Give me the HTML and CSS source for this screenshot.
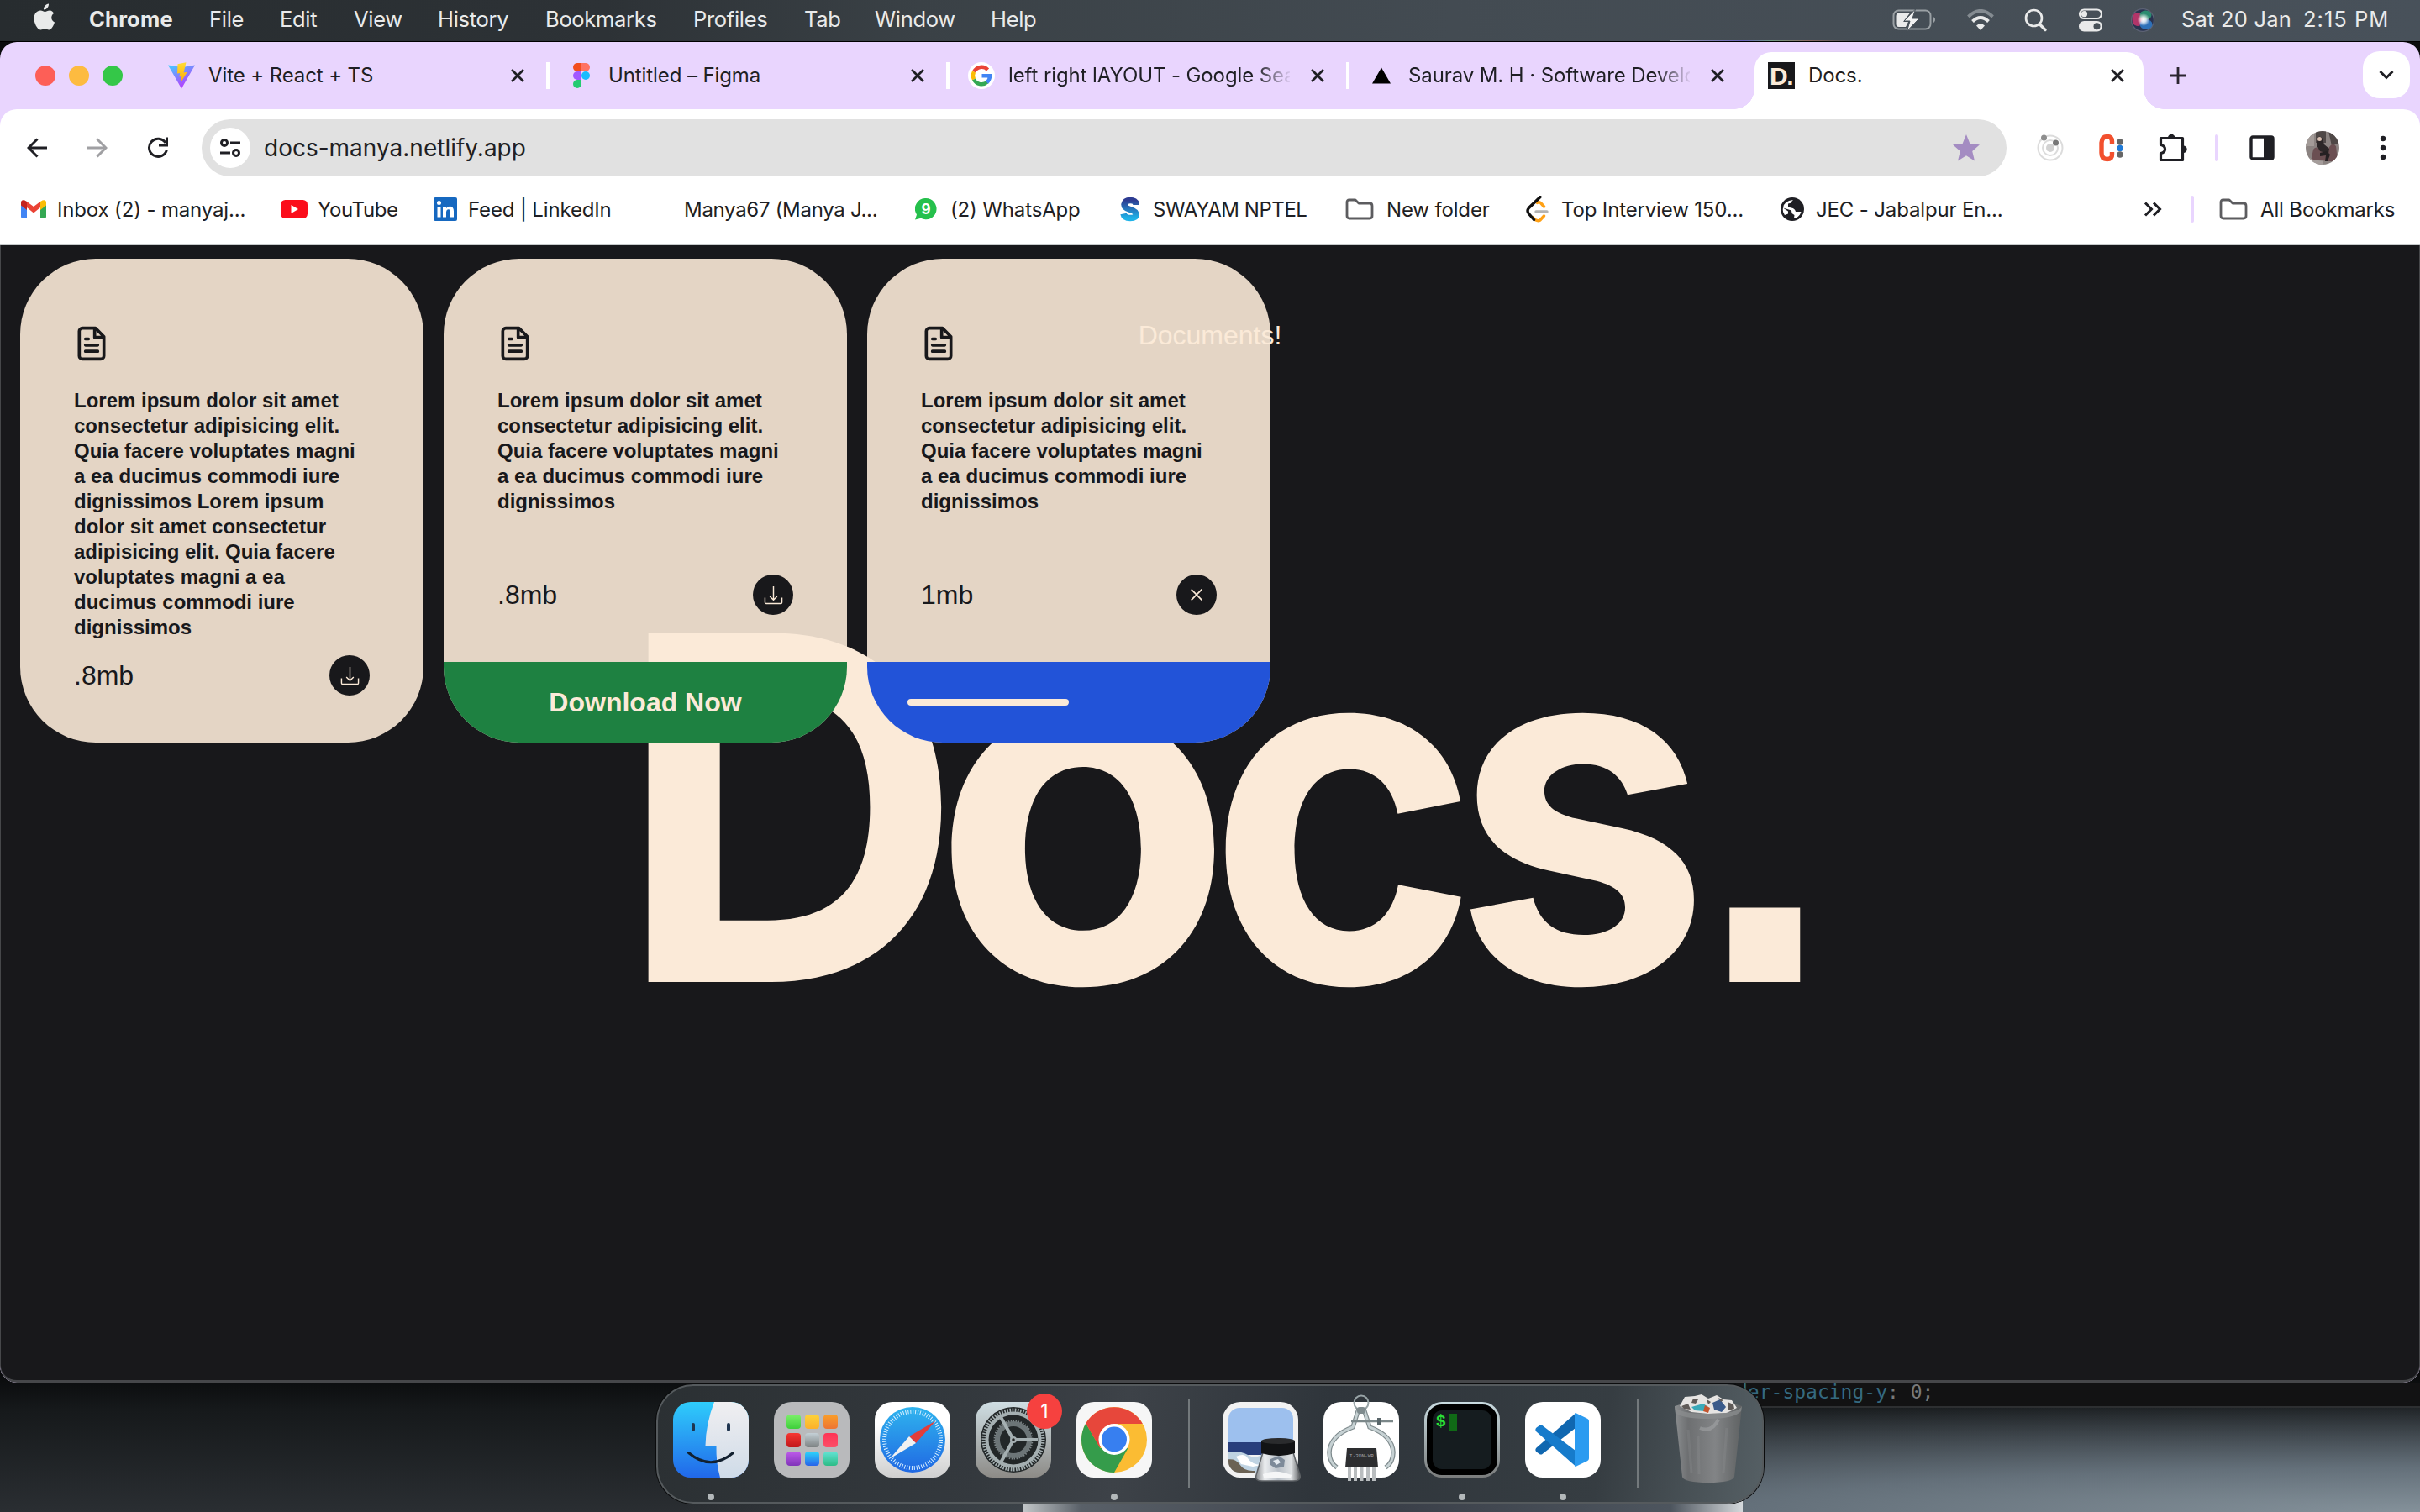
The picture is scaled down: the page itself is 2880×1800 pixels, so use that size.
FILE: index.html
```html
<!DOCTYPE html>
<html lang="en">
<head>
<meta charset="utf-8">
<title>Docs.</title>
<link rel="stylesheet" href="styles.css">
</head>
<body>
<svg width="0" height="0" class="defs" aria-hidden="true">
  <defs>
    <linearGradient id="finderBlue" x1="0" y1="0" x2="0" y2="1"><stop offset="0" stop-color="#2fcdfb"/><stop offset="1" stop-color="#2168ea"/></linearGradient>
    <linearGradient id="finderWhite" x1="0" y1="0" x2="0" y2="1"><stop offset="0" stop-color="#f0eff1"/><stop offset="1" stop-color="#cfdbe8"/></linearGradient>
    <linearGradient id="safariBlue" x1="0" y1="0" x2="0" y2="1"><stop offset="0" stop-color="#2fb4ee"/><stop offset="1" stop-color="#2068e3"/></linearGradient>
    <linearGradient id="viteA" x1="0" y1="0" x2=".6" y2="1"><stop offset="0" stop-color="#41d1ff"/><stop offset="1" stop-color="#bd34fe"/></linearGradient>
    <linearGradient id="viteB" x1="0" y1="0" x2="0" y2="1"><stop offset="0" stop-color="#ffdd35"/><stop offset="1" stop-color="#ffa800"/></linearGradient>
    <linearGradient id="swayam" x1="0" y1="0" x2="0" y2="1"><stop offset="0" stop-color="#2d3c92"/><stop offset="1" stop-color="#1fb2e8"/></linearGradient>
    <linearGradient id="bin" x1="0" y1="0" x2="1" y2="0"><stop offset="0" stop-color="#8b8e90"/><stop offset=".2" stop-color="#6d6f71"/><stop offset=".6" stop-color="#828486"/><stop offset="1" stop-color="#5f6263"/></linearGradient>
    <linearGradient id="glass" x1="0" y1="0" x2="1" y2="0"><stop offset="0" stop-color="#85888b"/><stop offset=".2" stop-color="#eceef0"/><stop offset=".5" stop-color="#b9c0c8"/><stop offset=".8" stop-color="#dfe2e4"/><stop offset="1" stop-color="#55585b"/></linearGradient>
    <radialGradient id="glow"><stop offset="0" stop-color="#fff"/><stop offset=".4" stop-color="#fff" stop-opacity=".8"/><stop offset="1" stop-color="#fff" stop-opacity="0"/></radialGradient>
    <symbol id="close" viewBox="0 0 18 18"><path d="M2 2L16 16M16 2L2 16" stroke="#1f1f24" stroke-width="2.800" fill="none"/></symbol>
    <symbol id="file" viewBox="0 0 24 24"><path d="M14.500 2H6a2 2 0 0 0-2 2v16a2 2 0 0 0 2 2h12a2 2 0 0 0 2-2V7.500z M14 2v6h6M16 13H8M16 17H8M10 9H8" fill="none" stroke="#18181b" stroke-width="2" stroke-linecap="round" stroke-linejoin="round"/></symbol>
    <symbol id="download" viewBox="0 0 24 24"><path d="M12 1v17M7.500 13.500L12 18l4.500-4.500M1.500 15v6q0 1.500 1.500 1.500h18q1.500 0 1.500-1.500v-6" fill="none" stroke="#fbead8" stroke-width="1.500"/></symbol>
    <symbol id="folder" viewBox="0 0 34 26"><path d="M2 4.500Q2 2 4.500 2H12l4 4h13q3 0 3 3v12q0 3-3 3H5q-3 0-3-3z" fill="none" stroke="#5c5c5f" stroke-width="2.800" stroke-linejoin="round"/></symbol>
  </defs>
</svg>

<header class="menubar">
  <svg class="apple" width="28" height="34" viewBox="0 0 28 34"><path d="M19 .5c.3 3.600-2.500 7-6 7C12.600 4 15.500 1 19 .5zM25 12c-4 2.500-3.600 8.500 1 10.500-1.200 4-3.600 8.500-6.500 9-2 .2-2.900-1.200-5.200-1.200S11 31.700 9.200 31.600C5 31 1.500 23 1.500 18c0-6 3.700-9.500 7.700-9.500 2.200 0 3.800 1.400 5.300 1.400s3.300-1.600 6-1.500c1.800.1 3.500 1.200 4.500 3.600z" fill="#e9eaea"/></svg>
  <span class="app">Chrome</span><span>File</span><span>Edit</span><span>View</span><span>History</span><span>Bookmarks</span><span>Profiles</span><span>Tab</span><span>Window</span><span>Help</span>
  <div class="status">
    <svg width="54" height="28" viewBox="0 0 54 28"><rect x="1.500" y="2.500" width="44" height="22" rx="6" fill="none" stroke="#9aa0a4" stroke-width="2"/><path d="M48.500 9.500q5 4 0 8z" fill="#9aa0a4"/><path d="M8 5.500h13L13 16h6l-3 6H8q-3.500 0-3.500-3.500v-9Q4.500 5.500 8 5.500z" fill="#e9eaea"/><path d="M27.500 1L14 15h7l-3.500 12L32 12h-8z" fill="#f2f2f2" stroke="#475058" stroke-width="1"/></svg>
    <svg width="34" height="26" viewBox="0 0 34 26"><path d="M2.500 9Q17-5 31.500 9" fill="none" stroke="#848b91" stroke-width="4"/><path d="M7.500 14.500q9.500-9 19 0" fill="none" stroke="#e9eaea" stroke-width="4"/><path d="M17 25l-5-5.500q5-4.500 10 0z" fill="#e9eaea"/></svg>
    <svg width="28" height="28" viewBox="0 0 28 28"><circle cx="11.500" cy="11.500" r="9.500" fill="none" stroke="#e9eaea" stroke-width="2.600"/><path d="M18 18.500l7 7" stroke="#e9eaea" stroke-width="3.400" stroke-linecap="round"/></svg>
    <svg width="30" height="28" viewBox="0 0 30 28"><rect x="2" y="1.500" width="26" height="10.500" rx="5.250" fill="none" stroke="#e9eaea" stroke-width="2.200"/><circle cx="7.500" cy="6.700" r="3.600" fill="#e9eaea"/><rect x="1" y="15" width="28" height="12.500" rx="6.250" fill="#e9eaea"/><circle cx="22.500" cy="21.200" r="4" fill="#475058"/></svg>
    <svg width="28" height="28" viewBox="0 0 28 28"><circle cx="14" cy="14" r="14" fill="#5d6375"/><circle cx="14" cy="14" r="12.800" fill="#2a3350"/><ellipse cx="8" cy="13" rx="6.500" ry="8" fill="#d5366f" opacity=".8"/><ellipse cx="17.500" cy="8" rx="7" ry="5.500" fill="#2c9b75" opacity=".85"/><ellipse cx="18" cy="19" rx="7.500" ry="6" fill="#2f7fd2" opacity=".8"/><circle cx="15" cy="13.500" r="7.500" fill="url(#glow)"/></svg>
    <span class="date">Sat 20 Jan</span><span class="time">2:15 PM</span>
  </div>
</header>

<section class="window">
  <nav class="tabs">
    <div class="lights"><i class="red"></i><i class="amber"></i><i class="green"></i></div>
    <div class="tab">
      <svg width="32" height="32" viewBox="0 0 32 32"><path d="M0 3.500L16 31.500 32 3.500 17 6z" fill="url(#viteA)"/><path d="M21.500.3L11.500 2.300 11 13.500l3.300-.6-1 4.600 3-.8-1.500 8 8-13-4.200.7z" fill="url(#viteB)"/></svg>
      <span class="label">Vite + React + TS</span><svg class="x" width="18" height="18"><use href="#close"/></svg>
    </div>
    <div class="tab">
      <svg width="32" height="32" viewBox="0 0 32 32"><path d="M16 1v10h-5a5 5 0 0 1 0-10z" fill="#f24e1e"/><path d="M16 1h5a5 5 0 0 1 0 10h-5z" fill="#ff7262"/><path d="M16 11v10h-5a5 5 0 0 1 0-10z" fill="#a259ff"/><circle cx="21" cy="16" r="5" fill="#1abcfe"/><path d="M16 21v5a5 5 0 1 1-5-5z" fill="#24cb71"/></svg>
      <span class="label">Untitled – Figma</span><svg class="x" width="18" height="18"><use href="#close"/></svg>
    </div>
    <div class="tab">
      <svg width="32" height="32" viewBox="0 0 32 32"><circle cx="16" cy="16" r="16" fill="#fff"/><g fill="none" stroke-width="4.400"><path d="M23.500 9A10.200 10.200 0 0 0 7 11.500" stroke="#ea4335"/><path d="M7 11.500a10.200 10.200 0 0 0 0 9" stroke="#fbbc04"/><path d="M7 20.500a10.200 10.200 0 0 0 16 3.200" stroke="#34a853"/><path d="M22.500 24a10.200 10.200 0 0 0 3.500-7.800H16.500" stroke="#4285f4"/></g></svg>
      <span class="label fade">left right lAYOUT - Google Search</span><svg class="x" width="18" height="18"><use href="#close"/></svg>
    </div>
    <div class="tab last">
      <svg width="32" height="32" viewBox="0 0 32 32"><path d="M16 6.500L27 25.500H5z" fill="#000"/></svg>
      <span class="label fade">Saurav M. H · Software Developer</span><svg class="x" width="18" height="18"><use href="#close"/></svg>
    </div>
    <div class="tab active">
      <span class="fav">D.</span>
      <span class="label">Docs.</span><svg class="x" width="18" height="18"><use href="#close"/></svg>
    </div>
    <svg class="plus" width="22" height="22" viewBox="0 0 22 22"><path d="M11 1v20M1 11h20" stroke="#2b2530" stroke-width="2.800"/></svg>
    <div class="tabsearch"><svg width="18" height="12" viewBox="0 0 18 12"><path d="M1.500 2L9 9.500 16.500 2" fill="none" stroke="#1f1f24" stroke-width="3"/></svg></div>
  </nav>

  <div class="toolbar">
    <div class="navbtns">
      <svg width="24" height="24" viewBox="0 0 24 24"><path d="M24 12H2.500M12.500 1.500L2 12l10.500 10.500" fill="none" stroke="#1f1f24" stroke-width="3"/></svg>
      <svg width="24" height="24" viewBox="0 0 24 24"><path d="M0 12h21.500M11.500 1.500L22 12 11.500 22.500" fill="none" stroke="#a0a0a3" stroke-width="3"/></svg>
      <svg width="26" height="26" viewBox="0 0 26 26"><path d="M22 7A10.600 10.600 0 1 0 23.500 15" fill="none" stroke="#1f1f24" stroke-width="3"/><path d="M25 .500V11.500H14V8.500H22V.500z" fill="#1f1f24"/></svg>
    </div>
    <div class="omnibox">
      <div class="tune"><svg width="26" height="22" viewBox="0 0 26 22"><g fill="none" stroke="#1f1f24" stroke-width="3"><circle cx="6" cy="5" r="3.500"/><path d="M13 5h12M1 17h12"/><circle cx="20" cy="17" r="3.500"/></g></svg></div>
      <span class="url">docs-manya.netlify.app</span>
      <svg class="star" width="34" height="32" viewBox="0 0 34 32"><path d="M17 0l4.500 11.300L33 12.300l-8.800 7.800L27 31.500l-10-6.200-10 6.200 2.800-11.400L1 12.300l11.500-1z" fill="#a48cc2"/></svg>
    </div>
    <div class="actions">
      <svg width="32" height="32" viewBox="0 0 32 32"><g fill="none" stroke="#dcdcdc" stroke-width="2"><circle cx="16" cy="16" r="14.500"/><circle cx="16" cy="16" r="9"/></g><circle cx="16" cy="16" r="5" fill="#d2d2d2"/><circle cx="8.500" cy="4" r="3.500" fill="#8e8e8e"/><circle cx="22.500" cy="10" r="3.500" fill="#777"/></svg>
      <svg width="32" height="34" viewBox="0 0 32 34"><path d="M16.500 12V9.500Q16.500 3.500 10.500 3.500T4 11v12q0 7.500 6.500 7.500t6-6V22" fill="none" stroke="#f2502e" stroke-width="5.400"/><circle cx="26" cy="10" r="3.700" fill="#666"/><circle cx="26" cy="17.500" r="3.700" fill="#1f7ad8"/><circle cx="26" cy="25" r="3.700" fill="#666"/></svg>
      <svg width="36" height="34" viewBox="0 0 36 34"><path d="M3.500 5.500h26v26h-26v-8q5-1 5-5t-5-5z" fill="none" stroke="#1f1f24" stroke-width="3.200" stroke-linejoin="round"/><path d="M12 5a4.200 4.200 0 0 1 8.400 0zM30.500 14.500a4.200 4.200 0 0 1 0 8.400z" fill="#1f1f24"/></svg>
      <i class="sep"></i>
      <svg width="30" height="30" viewBox="0 0 30 30"><rect x="2" y="2" width="26" height="26" rx="2" fill="none" stroke="#1f1f24" stroke-width="3.400"/><path d="M17 2h11v26H17z" fill="#1f1f24"/></svg>
      <svg width="40" height="40" viewBox="0 0 40 40"><clipPath id="av"><circle cx="20" cy="20" r="20"/></clipPath><g clip-path="url(#av)"><rect width="40" height="40" fill="#8b8381"/><path d="M0 0h10v18H0z" fill="#a39b98"/><path d="M12 0h12v14H12zM27 0h13v14l-9 4z" fill="#4f4847"/><path d="M6 36L9 22q3-5 8 0l10-1q4-8 9-3l2 18H26l-12-2z" fill="#6b4f52"/><path d="M14 8q3-3 6 1l2 7 6 5-1 6-10-3-4-7z" fill="#2b2627"/><circle cx="16.500" cy="9.500" r="2.500" fill="#d8bfb2"/><path d="M17 26l8-2 4 4-3 8h-3l1-7-7 1z" fill="#252022"/><path d="M0 30l9 4 12 2v4H0z" fill="#a59d9b"/></g></svg>
      <svg width="8" height="30" viewBox="0 0 8 30"><g fill="#1f1f24"><circle cx="4" cy="4" r="3.200"/><circle cx="4" cy="15" r="3.200"/><circle cx="4" cy="26" r="3.200"/></g></svg>
    </div>
  </div>

  <div class="bookmarks">
    <div class="bm"><svg width="30" height="22" viewBox="0 0 30 22"><path d="M0 3v17q0 2 2 2h5V9z" fill="#4285f4"/><path d="M30 3v17q0 2-2 2h-5V9z" fill="#34a853"/><path d="M7 9v-7l8 6 8-6v7l-8 6.500z" fill="#ea4335"/><path d="M0 3.500v3L7 12V2L4.500.6Q0-.6 0 3.500z" fill="#c5221f"/><path d="M30 3.500v3L23 12V2l2.500-1.400Q30-.6 30 3.500z" fill="#fbbc04"/></svg><span>Inbox (2) - manyaj...</span></div>
    <div class="bm"><svg width="32" height="22" viewBox="0 0 32 22"><rect width="32" height="22" rx="5.500" fill="#fb0d1b"/><path d="M12.500 6v10l8.500-5z" fill="#fff"/></svg><span>YouTube</span></div>
    <div class="bm"><svg width="28" height="28" viewBox="0 0 28 28"><rect width="28" height="28" rx="2" fill="#1668c0"/><circle cx="6.500" cy="6.500" r="2.500" fill="#fff"/><path d="M4.500 11h4v12.500h-4zM11 11h4v2q1.500-2.300 4.300-2.300 4.700 0 4.700 5.800v7h-4v-6.300q0-3-2.300-3T15 17.500v6h-4z" fill="#fff"/></svg><span>Feed | LinkedIn</span></div>
    <div class="bm"><span>Manya67 (Manya J...</span></div>
    <div class="bm"><svg width="26" height="26" viewBox="0 0 26 26"><path d="M13 0a12.600 12.600 0 1 1-6 23.700L0 25.500l2-6A12.600 12.600 0 0 1 13 0z" fill="#25c04c"/><text x="13" y="19" text-anchor="middle" class="nine">9</text></svg><span>(2) WhatsApp</span></div>
    <div class="bm"><svg width="24" height="30" viewBox="0 0 24 30"><path d="M19 10V8.500Q18 4.500 12 4.500T5 9.500Q5 13.500 12 15.500T19 21.500Q19 25.500 12 25.500T4 20.500" fill="none" stroke="url(#swayam)" stroke-width="7.500"/></svg><span>SWAYAM NPTEL</span></div>
    <div class="bm"><svg width="34" height="26"><use href="#folder"/></svg><span>New folder</span></div>
    <div class="bm"><svg width="28" height="32" viewBox="0 0 28 32"><path d="M13.500 8.500q2-1.500 4 0l4 4.500M8 25.500q5 6 9 3.500l4.500-5" fill="none" stroke="#ffa116" stroke-width="3.400" stroke-linecap="round"/><path d="M17 1.500L3.500 14.500q-3 3.500 0 7l6 7" fill="none" stroke="#111" stroke-width="3.400" stroke-linecap="round"/><path d="M12 19h13" stroke="#b3b3b3" stroke-width="3.400" stroke-linecap="round"/></svg><span>Top Interview 150...</span></div>
    <div class="bm"><svg width="28" height="28" viewBox="0 0 28 28"><circle cx="14" cy="14" r="14" fill="#1f1f24"/><path d="M15 3q-2 1-2 3.500l-4 1v4l4 1q4 .5 5 4.500h6.500q-2 7-8.500 7.800l.5-3.800-3-2-.5-3.500L3 12.500q-1 5 2 8.500l4-1.500v-3L3 12.500Q4 4 15 3z" fill="#fff"/></svg><span>JEC - Jabalpur En...</span></div>
    <svg width="22" height="18" viewBox="0 0 22 18"><path d="M2 1.500L9.500 9 2 16.500M12 1.500L19.500 9 12 16.500" fill="none" stroke="#1f1f24" stroke-width="3"/></svg>
    <i class="sep"></i>
    <div class="bm all"><svg width="34" height="26"><use href="#folder"/></svg><span>All Bookmarks</span></div>
  </div>

  <main class="page">
    <div class="hero">
      <p class="heading">Documents!</p>
      <h1 class="docs"><span class="d">D</span><span class="o">o</span><span class="c">c</span><span class="s">s</span><span class="dot">.</span></h1>
    </div>
    <div class="cards">
      <article class="card">
        <svg class="icon" width="44" height="44"><use href="#file"/></svg>
        <p>Lorem ipsum dolor sit amet consectetur adipisicing elit. Quia facere voluptates magni a ea ducimus commodi iure dignissimos Lorem ipsum dolor sit amet consectetur adipisicing elit. Quia facere voluptates magni a ea ducimus commodi iure dignissimos</p>
        <div class="foot"><span>.8mb</span><b class="round"><svg width="23" height="23"><use href="#download"/></svg></b></div>
      </article>
      <article class="card">
        <svg class="icon" width="44" height="44"><use href="#file"/></svg>
        <p>Lorem ipsum dolor sit amet consectetur adipisicing elit. Quia facere voluptates magni a ea ducimus commodi iure dignissimos</p>
        <div class="foot"><span>.8mb</span><b class="round"><svg width="23" height="23"><use href="#download"/></svg></b></div>
        <div class="tag go">Download Now</div>
      </article>
      <article class="card">
        <svg class="icon" width="44" height="44"><use href="#file"/></svg>
        <p>Lorem ipsum dolor sit amet consectetur adipisicing elit. Quia facere voluptates magni a ea ducimus commodi iure dignissimos</p>
        <div class="foot"><span>1mb</span><b class="round"><svg width="14" height="14" viewBox="0 0 14 14"><path d="M.7.7l12.600 12.600M13.300.7L.7 13.300" stroke="#fbead8" stroke-width="1.700"/></svg></b></div>
        <div class="tag busy"><i class="bar"></i></div>
      </article>
    </div>
  </main>
</section>

<footer class="desktop">
  <div class="editor"><span class="prop">der-spacing-y</span>: 0;</div>
  <div class="sliver"></div>
  <div class="dock">
    <div class="slot run"><svg width="90" height="90" viewBox="0 0 90 90"><clipPath id="fc"><rect width="90" height="90" rx="21"/></clipPath><g clip-path="url(#fc)"><rect width="90" height="90" fill="url(#finderBlue)"/><path d="M49 0Q39 26 38.500 52H51.500Q51 72 56 90H90V0z" fill="url(#finderWhite)"/></g><path d="M24 27v6M66 27v6" stroke="#1f3550" stroke-width="4" stroke-linecap="round"/><path d="M18.500 60.500Q45 83 71.500 60.500" fill="none" stroke="#12202f" stroke-width="3" stroke-linecap="round"/></svg></div>
    <div class="slot"><div class="launch"><i class="c1"></i><i class="c2"></i><i class="c3"></i><i class="c4"></i><i class="c5"></i><i class="c6"></i><i class="c7"></i><i class="c8"></i><i class="c9"></i></div></div>
    <div class="slot"><svg width="90" height="90" viewBox="0 0 90 90"><linearGradient id="sf" x1="0" y1="0" x2="0" y2="1"><stop offset=".3" stop-color="#fff"/><stop offset="1" stop-color="#cfcfcf"/></linearGradient><rect width="90" height="90" rx="21" fill="url(#sf)"/><circle cx="45" cy="45" r="39" fill="url(#safariBlue)"/><circle cx="45" cy="45" r="33.500" fill="none" stroke="#d8efff" stroke-width="5" stroke-dasharray="1 1.923"/><path d="M72.500 22.500L41 41l8 8z" fill="#e23d3a"/><path d="M18 67.500L41 41l8 8z" fill="#f1f1f1"/></svg></div>
    <div class="slot"><svg width="90" height="90" viewBox="0 0 90 90"><linearGradient id="sg" x1="0" y1="0" x2="0" y2="1"><stop offset="0" stop-color="#cfdee3"/><stop offset="1" stop-color="#8d8b87"/></linearGradient><rect width="90" height="90" rx="21" fill="url(#sg)"/><circle cx="45" cy="45" r="39" fill="#222728"/><g fill="none" stroke="#a4afb1"><circle cx="45" cy="45" r="35" stroke-width="5" stroke-dasharray="1.600 1.540"/><circle cx="45" cy="45" r="31.500" stroke-width="4"/><circle cx="45" cy="45" r="19" stroke-width="6" stroke="#6c7577"/><circle cx="45" cy="45" r="22.500" stroke-width="2" stroke-dasharray="1.500 1.500" stroke="#7c8587"/><path d="M45 45h29M45 45L30 18M45 45L30 72" stroke-width="4"/></g><circle cx="45" cy="45" r="4" fill="#a4afb1"/><circle cx="45" cy="45" r="1.800" fill="#222"/></svg><span class="badge">1</span></div>
    <div class="slot run"><svg width="90" height="90" viewBox="0 0 90 90"><rect width="90" height="90" rx="21" fill="#f6f6f6"/><circle cx="45" cy="45" r="39" fill="#fbbc33"/><path d="M11.200 25.500A39 39 0 0 0 45 84L61.500 55 28.500 55z" fill="#359c4b"/><path d="M11.200 25.500L28 54.500 45 26h33.800A39 39 0 0 0 11.200 25.500z" fill="#e7473b"/><circle cx="45" cy="44.500" r="18.500" fill="#fff"/><circle cx="45" cy="44.500" r="15" fill="#377ff0"/></svg></div>
    <i class="rule"></i>
    <div class="slot"><svg width="96" height="96" viewBox="0 0 96 96" class="spill"><rect width="90" height="90" rx="21" fill="#f2f2f2"/><clipPath id="pc"><rect x="7" y="7" width="77" height="77" rx="13"/></clipPath><g clip-path="url(#pc)"><rect width="90" height="50" fill="#9dc0ee"/><rect y="48" width="90" height="15" fill="#283e7c"/><path d="M0 60q20-3 30 3t18-2l42 3v26H0z" fill="#bfd3e2"/><path d="M0 70q14-5 20 4t18 8v8H0z" fill="#6b6254"/><path d="M16 65q10-5 14 2t16 8l-10 2-14-3z" fill="#fff"/></g><path d="M48 60h36l8 27q2 7-8 7H47q-9 0-7-7z" fill="url(#glass)" stroke="#5c6064" stroke-width="1.500"/><path d="M57 68l10-4 7 5-1 8-10 2-6-4z" fill="#7d8a99"/><path d="M60 70l6-2 3 4-5 3z" fill="#e4eaf0"/><path d="M48 86q16-7 34 1l-1 3H49z" fill="#f5f6f7"/><path d="M46 46v15q20 6 40 0V46z" fill="#121315"/><ellipse cx="66" cy="46.500" rx="20" ry="3.500" fill="#2a2b2d"/></svg></div>
    <div class="slot"><svg width="90" height="106" viewBox="0 -9 90 106" class="tall"><rect width="90" height="90" rx="21" fill="#fff"/><circle cx="45" cy="1" r="8.500" fill="none" stroke="#98a4a7" stroke-width="2"/><path d="M42 8L35 30Q8 40 7 60q0 12 9 18M48 8l7 22q27 10 28 30 0 12-9 18" fill="none" stroke="#7f8b8e" stroke-width="5.500"/><path d="M42 8L35 30Q8 40 7 60q0 12 9 18M48 8l7 22q27 10 28 30 0 12-9 18" fill="none" stroke="#c6d1d3" stroke-width="3"/><path d="M33 23h50" stroke="#7b8789" stroke-width="2.500"/><rect x="40" y="6" width="10" height="8" rx="3" fill="#7f8b8e"/><path d="M66 19v8" stroke="#59666a" stroke-width="4"/><path d="M28 55h35l2 23H26z" fill="#2d2e30"/><g class="chip"><text x="45.500" y="66" text-anchor="middle">I-3DN-WB</text></g><path d="M31 77v17M38 77v17M45.500 77v17M53 77v17M60 77v17" stroke="#b9bdbf" stroke-width="4"/></svg></div>
    <div class="slot run"><div class="term"><div class="screen"><span>$</span><i></i></div></div></div>
    <div class="slot run"><svg width="90" height="90" viewBox="0 0 90 90"><rect width="90" height="90" rx="21" fill="#fff"/><path d="M60 13.500L13 55q-1.500 2 0 4l4 3q2 1 3.500 0L60 31z" fill="#1067b0"/><path d="M60 76.500L13 35q-1.500-2 0-4l4-3q2-1 3.500 0L60 58z" fill="#167bcb"/><path d="M59 13.500q1-.5 2 0l13 6.200q2 1 2 3v44.600q0 2-2 3L61 76.500q-1 .5-2 0z" fill="#2b9bf0"/></svg></div>
    <i class="rule"></i>
    <div class="slot bin"><svg width="84" height="106" viewBox="0 0 84 106" class="tall"><path d="M2 14q40-14 80 0l-9 84q-2 7-31 7t-31-7z" fill="url(#bin)"/><path d="M8 14L14 3l12-1 8-2 8 5L52 1l8 5 10 1 6 9-12 6-22 1-20-2z" fill="#e6e4e2"/><path d="M22 15l14-4 6 4-4 5-12-1z" fill="#3aa9b8"/><path d="M47 10l9-4 7 9-5 6-9-3z" fill="#3a5a8a"/><path d="M38 13l6 3-2 6-6-2z" fill="#c3552e"/><path d="M10 14l8-3 3 7-8-1zM24 5l6 1-3 5-5-1zM54 4l6 3-3 2zM65 9l7 3 1 5-7 2zM40 6l5 3-3 3z" fill="#5f5a57"/><path d="M2 14q4 9 40 9t40-9l-1 6q-8 9-39 9T3 22z" fill="#8b8d8f" opacity=".75"/><path d="M18 42l4 52M30 50l1 45M64 40l-4 54" stroke="#9a9c9e" stroke-width="3" opacity=".2"/><path d="M32 40q14 6 22-10" stroke="#a8aaab" stroke-width="4" opacity=".5" fill="none"/></svg></div>
  </div>
</footer>
</body>
</html>
```
FILE: styles.css
```css
* { box-sizing: border-box; }
body {
  margin: 0;
  width: 2880px;
  height: 1800px;
  overflow: hidden;
  position: relative;
  background: #0b0c0e;
  font-family: Inter, "Liberation Sans", sans-serif;
  color: #1f1f24;
}
svg { display: block; flex: none; }
.defs { position: absolute; }

/* menu bar */
.menubar {
  height: 50px;
  border-bottom: 1px solid #000;
  padding-left: 39px;
  display: grid;
  grid-template-columns: 67px 143px 84px 88px 100px 128px 176px 132px 84px 138px 100px 1fr;
  align-items: center;
  background:
    linear-gradient(90deg, #9aa0a8, #6a64b8 40%, #6f9a80 55%, #8a6a64 75%, transparent) 1987px 48px / 220px 1px no-repeat,
    linear-gradient(90deg, #272c2f 0, #2d3236 25%, #3a4146 38%, #434b52 60%, #48515a 100%);
  color: #e9eaea;
  font-size: 25.500px;
  letter-spacing: -.3px;
  white-space: nowrap;
}
.menubar span { line-height: 46px; padding-bottom: 3px; }
.apple { margin-top: -7px; }
.menubar .app { font-weight: 700; letter-spacing: .2px; }
.status { display: flex; justify-content: flex-end; align-items: center; padding-right: 36px; margin-top: -1px; letter-spacing: .2px; }
.status svg:nth-child(1) { margin-right: 34px; }
.status svg:nth-child(2) { margin-right: 35px; }
.status svg:nth-child(3) { margin-right: 36px; }
.status svg:nth-child(4) { margin-right: 33px; }
.status svg:nth-child(5) { margin-right: 32px; }
.status .date { width: 145px; }
.status .time { width: 103px; letter-spacing: 1px; }

/* browser window */
.window {
  height: 1596px;
  border-radius: 20px;
  overflow: hidden;
  background: #e9d5fe;
  display: flex;
  flex-direction: column;
  position: relative;
  z-index: 1;
}
.tabs { height: 80px; display: flex; align-items: center; }
.lights { width: 178px; padding-left: 42px; display: flex; gap: 16px; }
.lights i { width: 24px; height: 24px; border-radius: 50%; }
.red { background: #fd5f57; }
.amber { background: #fdbb40; }
.green { background: #34c748; }
.tab {
  width: 476px;
  height: 32px;
  padding-left: 22px;
  display: flex;
  align-items: center;
  font-size: 24px;
  letter-spacing: -.1px;
  flex: none;
  border-right: 4px solid #fff;
  position: relative;
}
.tab.last { border-right-color: transparent; }
.label { width: 335px; margin-left: 16px; white-space: nowrap; overflow: hidden; line-height: 32px; flex: none; }
.fade { -webkit-mask-image: linear-gradient(90deg, #000 88%, transparent 101%); mask-image: linear-gradient(90deg, #000 88%, transparent 101%); }
.x { margin-left: 24px; }
.tab.active {
  height: 68px;
  margin: 12px 0 0 6px;
  width: 463px;
  padding-left: 16px;
  border: 0;
  background: #fff;
  border-radius: 20px 20px 0 0;
}
.tab.active::before, .tab.active::after {
  content: "";
  position: absolute;
  bottom: 0;
  width: 24px;
  height: 24px;
}
.tab.active::before { left: -24px; background: radial-gradient(circle at 0 0, transparent 23.500px, #fff 24px); }
.tab.active::after { right: -24px; background: radial-gradient(circle at 100% 0, transparent 23.500px, #fff 24px); }
.tab.active > * { position: relative; top: -6px; }
.fav {
  width: 32px;
  height: 32px;
  background: #18181b;
  color: #fbead8;
  font: 700 30px/33px "Liberation Sans", sans-serif;
  letter-spacing: -1.500px;
  padding-left: 2px;
  overflow: hidden;
}
.plus { margin-left: 30px; }
.tabsearch {
  width: 56px;
  height: 56px;
  margin: -2px 12px 0 auto;
  border-radius: 20px;
  background: #fff;
  display: grid;
  place-items: center;
}

.toolbar {
  height: 92px;
  padding: 0 0 0 32px;
  display: flex;
  align-items: center;
  background: #fff;
  border-radius: 20px 20px 0 0;
}
.navbtns { width: 208px; flex: none; display: flex; gap: 48px; align-items: center; }
.navbtns svg:last-child { margin-left: -1px; }
.omnibox {
  width: 2148px;
  height: 68px;
  flex: none;
  border-radius: 34px;
  background: #e1e1e1;
  display: flex;
  align-items: center;
  padding: 0 31px 0 10px;
}
.tune { width: 48px; height: 48px; border-radius: 50%; background: #fff; display: grid; place-items: center; }
.url { margin-left: 16px; font-size: 28px; }
.star { margin-left: auto; }
.actions { margin-left: 36px; display: flex; align-items: center; flex: none; }
.actions > :nth-child(2) { margin-left: 41px; }
.actions > :nth-child(3) { margin-left: 39px; }
.actions > :nth-child(4) { margin-left: 32px; }
.actions > :nth-child(5) { margin-left: 37px; }
.actions > :nth-child(6) { margin-left: 37px; }
.actions > :nth-child(7) { margin-left: 48px; }
.sep { width: 4px; height: 32px; border-radius: 2px; background: #e9d5fe; }

.bookmarks {
  height: 70px;
  padding: 0 0 14px 25px;
  border-bottom: 2px solid #c6cacb;
  background: #fff;
  display: grid;
  grid-template-columns: 309px 182px 299px 274px 244px 268px 215px 303px 432px 56px 34px 1fr;
  align-items: center;
  font-size: 24px;
  letter-spacing: -.15px;
  white-space: nowrap;
}
.bm { display: flex; align-items: center; gap: 13px; }
.bm:nth-child(2) { gap: 12px; letter-spacing: -.4px; }
.bm:nth-child(4) { margin-left: -1px; letter-spacing: -.3px; }
.bm:nth-child(5) { gap: 16px; }
.bm:nth-child(6) { gap: 15px; letter-spacing: -.45px; }
.bm:nth-child(7), .bm.all { gap: 15px; }
.bm:nth-child(8), .bm:nth-child(9) { gap: 14px; }
.nine { font: 700 17px Inter, sans-serif; fill: #fff; }

/* page */
.page { flex: 1; background: #18181b; border: solid #46474a; border-width: 0 1px 3px; border-radius: 0 0 20px 20px; display: grid; }
.page > * { grid-area: 1 / 1; }
.hero { display: flex; flex-direction: column; align-items: center; color: #fbead8; font-family: "Liberation Sans", Arial, sans-serif; }
.heading { margin: 87px 0 0; font-size: 32px; line-height: 40px; }
.docs {
  margin: 208px 0 0;
  padding-left: 733px;
  align-self: flex-start;
  font-family: Inter, "Liberation Sans", sans-serif;
  font-size: 571px;
  line-height: 670px;
  height: 670px;
  font-weight: 700;
  letter-spacing: -31px;
  white-space: nowrap;
}
.d { letter-spacing: -37px; }
.o { font-size: 585px; line-height: 1; }
.c, .s { display: inline-block; transform: scale(.96, 1.015); transform-origin: 0 81%; }
.c { letter-spacing: -44px; }
.dot { font-family: "Liberation Sans", Arial, sans-serif; font-size: 595px; line-height: 1; letter-spacing: 0; }
.cards { display: flex; gap: 24px; padding: 16px 23px; align-items: flex-start; font-family: "Liberation Sans", Arial, sans-serif; z-index: 1; }
.card {
  width: 480px;
  height: 576px;
  border-radius: 90px;
  overflow: hidden;
  background: rgba(251, 234, 216, .9);
  color: #18181b;
  display: flex;
  flex-direction: column;
}
.card .icon { margin: 79px 0 0 63px; }
.card p { margin: 31px 64px 0; font-size: 24px; line-height: 30px; font-weight: 700; }
.foot { margin: auto 64px 56px; display: flex; justify-content: space-between; align-items: center; font-size: 32px; line-height: 48px; }
.round { width: 48px; height: 48px; border-radius: 50%; background: #18181b; display: grid; place-items: center; }
.tag { height: 96px; flex: none; display: flex; align-items: center; }
.go { background: #1e8141; color: #fbead8; font-weight: 700; font-size: 32px; justify-content: center; }
.busy { background: #2253d8; padding-left: 48px; }
.bar { width: 192px; height: 8px; border-radius: 4px; background: #fbead8; }

/* desktop strip and dock */
.desktop {
  height: 174px;
  margin-top: -20px;
  position: relative;
  background:
    radial-gradient(ellipse 2300px 150px at 100% 100%, #84919a 0, #64707a 35%, transparent 90%),
    linear-gradient(180deg, #060708 0, #16191b 30%, #2a2e32 100%);
}
.editor {
  position: absolute;
  left: 2066px;
  right: 0;
  top: 20px;
  height: 30px;
  background: #121213;
  border-bottom: 2px solid #2d2f31;
  font: 23px/22px "DejaVu Sans Mono", monospace;
  color: #77797a;
}
.prop { color: #356a80; }
.sliver { position: absolute; left: 1218px; width: 856px; bottom: 0; height: 20px; background: linear-gradient(90deg, #c2c6c8 0, #596068 8%, #3a3f48 50%, #4d555e 90%, #d5d9dc 100%); }
.dock {
  position: absolute;
  left: 781px;
  top: 22px;
  width: 1318px;
  height: 142px;
  border: 2px solid #555a5d;
  border-radius: 44px;
  background: linear-gradient(100deg, #2b3033 0, #34393e 30%, #3d4248 42%, #2f353b 60%, #363d42 85%, #566065 100%);
  display: flex;
  align-items: center;
  padding: 0 3px;
  box-shadow: 0 0 0 1px #0b0c0d;
}
.slot { width: 120px; height: 100%; padding: 19px 15px 0; position: relative; z-index: 2; }
.run::after { content: ""; position: absolute; left: 56px; top: 128px; width: 8px; height: 8px; border-radius: 50%; background: #b3b8ba; }
.spill { overflow: visible; }
.tall { margin-top: -9px; }
.rule { width: 2px; height: 106px; background: #73797c; margin: -1px 24px 0 28px; }
.bin { width: 130px; padding-left: 17px; }
.badge { position: absolute; left: 76px; top: 9px; width: 42px; height: 42px; border-radius: 50%; background: #f6413f; color: #fff; font-size: 23px; line-height: 42px; text-align: center; }
.launch { width: 90px; height: 90px; border-radius: 21px; background: #b9babc; display: grid; grid-template-columns: repeat(3, 17px); gap: 5px; place-content: center; }
.launch i { height: 17px; border-radius: 4px; }
.c1 { background: linear-gradient(#7df06b, #3ecf3b); }
.c2 { background: linear-gradient(#fdd33b, #fcb02a); }
.c3 { background: linear-gradient(#f99f29, #ee7433); }
.c4 { background: linear-gradient(#f73732, #c0171a); }
.c5 { background: linear-gradient(#c4d0d6, #7d8283); }
.c6 { background: linear-gradient(#fe3455, #fc4f68); }
.c7 { background: linear-gradient(#be5bea, #8034b9); }
.c8 { background: linear-gradient(#2bd6fb, #2864ea); }
.c9 { background: linear-gradient(#63e3d4, #2cbc86); }
.term { width: 90px; height: 90px; border-radius: 21px; background: linear-gradient(#c9dbe0, #7a7c7c); padding: 3px; }
.screen { height: 84px; border-radius: 18px; border: 7px solid #000; background: #151c1f; display: flex; gap: 3px; padding: 3px 0 0 4px; }
.screen span { font: 700 20px/22px "Liberation Mono", monospace; color: #2be036; }
.screen i { width: 10px; height: 20px; background: #106a16; margin-top: 1px; }
.chip text { font: 6px "Liberation Mono", monospace; fill: #a5a6a7; }
```
